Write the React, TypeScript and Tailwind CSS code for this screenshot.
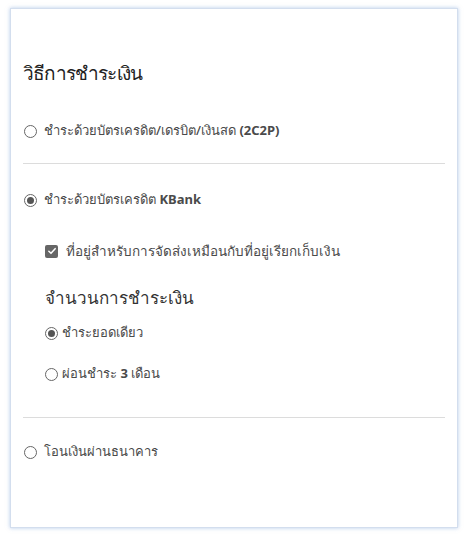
import type { ReactNode } from "react";

function Radio({ checked = false }: { checked?: boolean }) {
  return (
    <span className="flex size-[13px] shrink-0 items-center justify-center rounded-full border border-[#666] bg-white">
      {checked ? <span className="size-[7px] rounded-full bg-[#555]" /> : null}
    </span>
  );
}

function Checkbox() {
  return (
    <span className="flex size-[13px] shrink-0 items-center justify-center rounded-[2px] bg-[#666]">
      <svg viewBox="0 0 12 12" className="size-[10px]" fill="none">
        <path
          d="M2.2 6.3 4.8 8.8 9.8 3.2"
          stroke="white"
          strokeWidth="1.8"
          strokeLinecap="round"
          strokeLinejoin="round"
        />
      </svg>
    </span>
  );
}

function OptionRow({
  children,
  control,
  className = "",
}: {
  children: ReactNode;
  control: ReactNode;
  className?: string;
}) {
  return (
    <label className={`flex h-7 items-center ${className}`}>
      {control}
      <span className="text-[13px] font-medium text-[#4a4a4a]">{children}</span>
    </label>
  );
}

export default function App() {
  return (
    <div className="min-h-[538px] bg-white pt-2 pl-[10px] pr-[7px] font-['Noto_Sans','Liberation_Sans',sans-serif]">
      <div className="h-[520px] border border-[#d3deee] bg-white px-3 pt-[50px] shadow-[0_0_4px_rgba(120,160,215,0.55)]">
        <h1 className="h-7 text-[19px] leading-7 tracking-[-0.8px] text-[#222]">
          วิธีการชำระเงิน
        </h1>

        <OptionRow className="mt-[30px] gap-[7px] pl-[1px]" control={<Radio />}>
          ชำระด้วยบัตรเครดิต/เดรบิต/เงินสด <b className="font-bold">(2C2P)</b>
        </OptionRow>

        <div className="mt-[18px] h-px bg-[#dcdcdc]" />

        <OptionRow className="mt-[22px] gap-[7px] pl-[1px]" control={<Radio checked />}>
          ชำระด้วยบัตรเครดิต <b className="font-bold">KBank</b>
        </OptionRow>

        <div className="pl-[22px]">
          <OptionRow className="mt-[23px] gap-[8px]" control={<Checkbox />}>
            <span className="text-[13.5px] font-normal">
              ที่อยู่สำหรับการจัดส่งเหมือนกับที่อยู่เรียกเก็บเงิน
            </span>
          </OptionRow>

          <h2 className="mt-[19px] h-7 text-[17px] leading-7 text-[#333]">
            จำนวนการชำระเงิน
          </h2>

          <OptionRow className="mt-[7px] gap-[4px]" control={<Radio checked />}>
            ชำระยอดเดียว
          </OptionRow>

          <OptionRow className="mt-[13px] gap-[4px]" control={<Radio />}>
            ผ่อนชำระ <b className="font-bold">3</b> เดือน
          </OptionRow>
        </div>

        <div className="mt-[29px] h-px bg-[#dcdcdc]" />

        <OptionRow className="mt-[20px] gap-[7px] pl-[1px]" control={<Radio />}>
          โอนเงินผ่านธนาคาร
        </OptionRow>
      </div>
    </div>
  );
}
